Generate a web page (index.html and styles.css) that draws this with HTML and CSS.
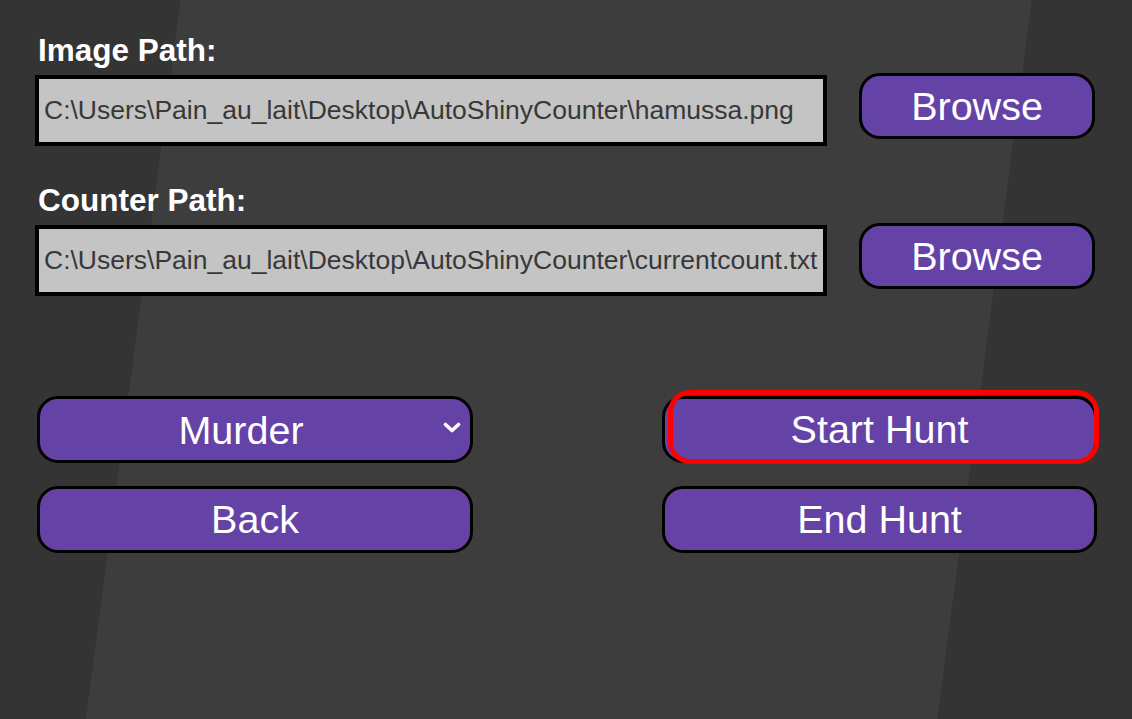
FILE: index.html
```html
<!DOCTYPE html>
<html lang="en">
<head>
  <meta charset="UTF-8">
  <meta name="viewport" content="width=device-width, initial-scale=1.0">
  <title>Auto Shiny Counter</title>
  <link rel="stylesheet" href="styles.css">
</head>
<body>
  <div class="panel">
    <label class="field-label" for="imagePath">Image Path:</label>
    <div class="path-row">
      <input class="path-input" id="imagePath" type="text" value="C:\Users\Pain_au_lait\Desktop\AutoShinyCounter\hamussa.png">
      <button class="btn browse">Browse</button>
    </div>

    <label class="field-label second" for="counterPath">Counter Path:</label>
    <div class="path-row">
      <input class="path-input" id="counterPath" type="text" value="C:\Users\Pain_au_lait\Desktop\AutoShinyCounter\currentcount.txt">
      <button class="btn browse">Browse</button>
    </div>

    <div class="controls">
      <div class="select-wrap">
        <select class="btn mode" id="mode">
          <option>Murder</option>
          <option>Catch</option>
        </select>
        <svg class="chevron" width="18" height="12" viewBox="0 0 18 12">
          <path d="M2.5 2.5 L9 8.5 L15.5 2.5" fill="none" stroke="#fff" stroke-width="3.6" stroke-linecap="round" stroke-linejoin="round"/>
        </svg>
      </div>
      <button class="btn start">Start Hunt</button>
      <button class="btn">Back</button>
      <button class="btn">End Hunt</button>
    </div>
  </div>
</body>
</html>
```

FILE: styles.css
```css
body {
  margin: 0;
  height: 719px;
  overflow: hidden;
  font-family: "Liberation Sans", Arial, sans-serif;
  background: linear-gradient(97.5deg, #343434 179px, #3d3d3d 179px, #3d3d3d 1023px, #343434 1023px);
}

.panel {
  padding: 32px 0 0 35px;
}

.field-label {
  display: block;
  margin-left: 3px;
  color: #fff;
  font-weight: bold;
  font-size: 31.5px;
  line-height: 36px;
}

.field-label.second {
  margin-top: 36px;
}

.path-row {
  display: flex;
  align-items: flex-start;
  margin-top: 7px;
}

.path-input {
  box-sizing: border-box;
  width: 792px;
  height: 71px;
  margin: 0;
  padding: 0 0 0 5px;
  border: 4px solid #000;
  background-color: #c4c4c4;
  color: #383838;
  font-family: "Liberation Sans", Arial, sans-serif;
  font-size: 26.5px;
}

.btn {
  box-sizing: border-box;
  height: 67px;
  margin: 0;
  border: 3px solid #000;
  border-radius: 21px;
  background-color: #6542a6;
  color: #fff;
  font-family: "Liberation Sans", Arial, sans-serif;
  font-size: 39.5px;
  cursor: pointer;
}

.browse {
  width: 236px;
  height: 66px;
  margin: -2px 0 0 32px;
  padding: 0;
}

.controls {
  display: grid;
  grid-template-columns: 436px 435px;
  column-gap: 189px;
  row-gap: 23px;
  margin: 100px 0 0 2px;
}

.select-wrap {
  position: relative;
}

.mode {
  width: 100%;
  padding: 0 28px 0 0;
  appearance: none;
  -webkit-appearance: none;
  text-align: center;
  text-align-last: center;
}

.chevron {
  position: absolute;
  right: 12px;
  top: 26px;
  pointer-events: none;
}

.start {
  position: relative;
}

.start::after {
  content: "";
  position: absolute;
  top: -9px;
  left: 3px;
  right: -5px;
  bottom: -4px;
  border: 5px solid #ff0000;
  border-radius: 22px;
}
```
